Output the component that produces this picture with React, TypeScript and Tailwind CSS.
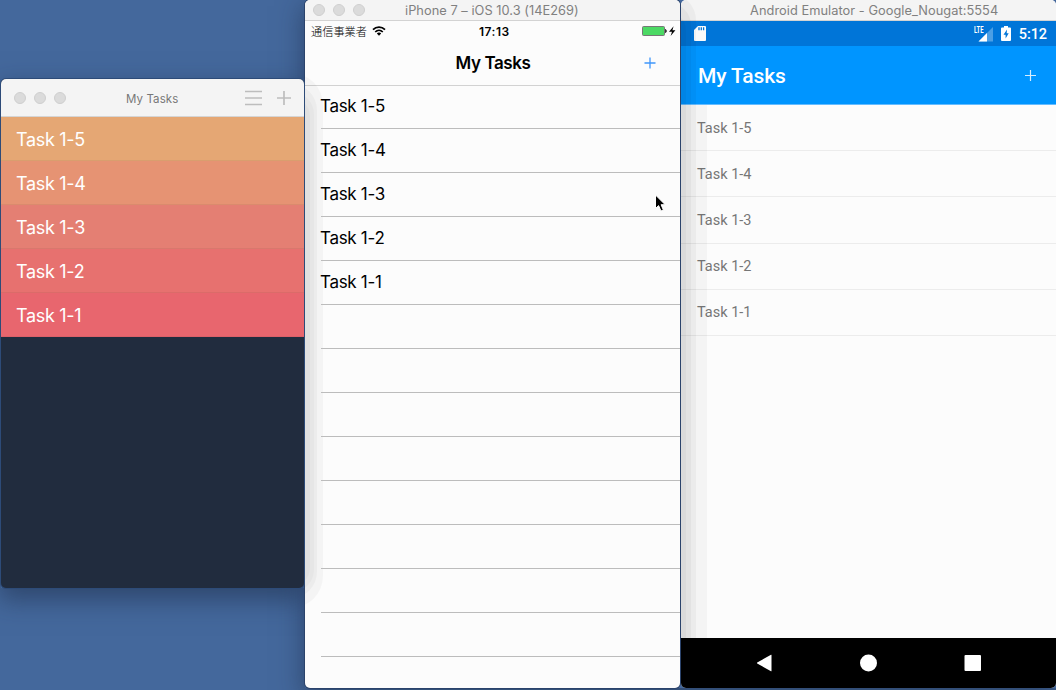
import React from "react";

const rows = ["Task 1-5", "Task 1-4", "Task 1-3", "Task 1-2", "Task 1-1"];
const heat = ["bg-[#e5a774]", "bg-[#e69373]", "bg-[#e47f73]", "bg-[#e7716f]", "bg-[#e8666e]"];
const emptyRows = [1, 2, 3, 4, 5, 6, 7, 8];

function Lights() {
  return (
    <div className="flex gap-2">
      {[0, 1, 2].map((i) => (
        <span key={i} className="size-3 rounded-full border border-[#cfcfcf] bg-[#dbdbdb]" />
      ))}
    </div>
  );
}

function MacWindow() {
  return (
    <section className="absolute left-px top-[79px] flex h-[509px] w-[303px] flex-col overflow-hidden rounded-[5px] bg-[#212c3e] font-['Inter',sans-serif] shadow-[0_0_0_1px_#2d4b78]">
      <header className="relative flex h-[38px] shrink-0 items-center border-b border-[#d5d5d5] bg-[#f4f4f4] px-[13px]">
        <Lights />
        <span className="ml-[60px] mt-[4px] w-[53px] whitespace-nowrap text-[11.5px] tracking-[0.1px] text-[#777]">My Tasks</span>
        <svg className="-mr-px ml-auto" width="48" height="16" viewBox="0 0 48 16" fill="none" stroke="#bdbdbd" strokeWidth="1.7">
          <path d="M1 1.5H18M1 8H18M1 14.5H18M33 8H47M40 1V15" />
        </svg>
      </header>
      {rows.map((r, i) => (
        <div key={r} className={"flex h-11 shrink-0 items-center border-b border-black/5 pl-[15px] pt-[2px] text-[18px] text-white " + heat[i]}>
          <span className="tracking-[-0.3px]">{r}</span>
        </div>
      ))}
    </section>
  );
}

function IosWindow() {
  return (
    <section className="absolute left-[305px] top-0 flex h-[688px] w-[375px] flex-col overflow-hidden rounded-[5px] bg-[#fcfcfc] font-['Inter',sans-serif] shadow-[0_0_0_1px_#2b436b]">
      <header className="relative flex h-[21px] shrink-0 items-center border-b border-[#d3d3d3] bg-[#f4f4f4] pl-2">
        <Lights />
        <span className="ml-[40px] mt-px whitespace-nowrap text-[12.8px] tracking-[0.04px] text-[#808080]">iPhone 7 – iOS 10.3 (14E269)</span>
      </header>
      <div className="relative z-10 flex h-5 shrink-0 items-center text-black">
        <span className="ml-[6px] w-[56px] whitespace-nowrap font-['Noto_Sans_CJK_JP',sans-serif] text-[11.2px] font-light">通信事業者</span>
        <svg className="ml-[5px] w-[14px]" width="14" height="10" viewBox="0 0 14 10" fill="none" stroke="#000" strokeWidth="1.7">
          <path d="M1 3.6C4.3.2 9.7.2 13 3.6M3.2 6C5.4 3.9 8.6 3.9 10.8 6" />
          <path d="M4.8 7.4C6 6.3 8 6.3 9.2 7.4L7 9.8Z" fill="#000" stroke="none" />
        </svg>
        <span className="ml-[93px] mt-px text-[12px] font-semibold tracking-[0.5px]">17:13</span>
        <svg className="ml-auto mr-[4px]" width="34" height="12" viewBox="0 0 34 12">
          <rect x=".5" y="1.5" width="22" height="9" rx="1" fill="#4cd964" stroke="#777" />
          <path d="M23.5 4.2Q25.5 6 23.5 7.8Z" fill="#000" stroke="#000" strokeWidth=".5" />
          <path d="M31.6 1.2L27 6.8H30L28.6 11L33.4 5.3H30.4Z" fill="#000" />
        </svg>
      </div>
      <div className="relative flex h-[45px] shrink-0 items-center justify-center border-b border-[#d2d2d2] pt-[2px]">
        <span className="ml-px text-[17px] font-semibold tracking-[-0.4px] text-black">My Tasks</span>
        <svg className="absolute right-[24px] top-[16px]" width="12" height="12" viewBox="0 0 12 12" stroke="#3f96fa" strokeWidth="1.3">
          <path d="M.5 6H11.5M6 .5V11.5" />
        </svg>
      </div>
      <div className="pointer-events-none absolute -left-6 top-[73px] h-[535px] w-[42px] rounded-r-[32px] bg-black/[0.03]" />
      <div className="pointer-events-none absolute -left-6 top-[84px] h-[514px] w-[36px] rounded-r-[26px] bg-black/[0.03]" />
      <div className="pointer-events-none absolute -left-6 top-[92px] h-[500px] w-[33px] rounded-r-[22px] bg-black/[0.025]" />
      <div className="pointer-events-none absolute -left-6 top-[98px] h-[488px] w-[29px] rounded-r-[18px] bg-black/[0.025]" />
      <div className="relative">
        {rows.map((r, i) => (
          <div key={r} className={"ml-4 flex items-center border-b border-[#bcbcbc] text-[17px] text-black " + (i === 0 ? "h-[43px]" : "h-11 pt-px")}>
            <span className="-ml-px tracking-[-0.3px]">{r}</span>
          </div>
        ))}
        {emptyRows.map((n) => (
          <div key={n} className="ml-4 h-11 border-b border-[#bcbcbc]" />
        ))}
      </div>
    </section>
  );
}

function AndroidWindow() {
  return (
    <section className="absolute left-[681px] top-0 flex h-[688px] w-[375px] flex-col overflow-hidden rounded-[5px] bg-[#fcfcfc] font-['Roboto',sans-serif]">
      <header className="flex h-[21px] shrink-0 items-center border-b border-[#d3d3d3] bg-[#f4f4f4]">
        <span className="ml-[69px] mt-px whitespace-nowrap font-['Inter',sans-serif] text-[12.8px] tracking-[0.05px] text-[#808080]">Android Emulator - Google_Nougat:5554</span>
      </header>
      <div className="flex h-[25px] shrink-0 items-center bg-[#0075d8] pl-[13px] pr-[9px] text-white">
        <svg width="12" height="15" viewBox="0 0 12 15">
          <path d="M4 0H11Q12 0 12 1V14Q12 15 11 15H1Q0 15 0 14V4Z" fill="#fafafa" />
          <path d="M5 1.2V4.2M7.3 1.2V4.2M9.6 1.2V4.2" stroke="#0075d8" strokeWidth="1.3" />
        </svg>
        <div className="relative ml-auto h-[16px] w-[20px]">
          <svg className="absolute inset-0" width="20" height="16" viewBox="0 0 20 16">
            <path d="M19 1V15.5H4.5Z" fill="#4b9fe5" />
            <path d="M13 7V15.5H4.5Z" fill="#fff" />
          </svg>
          <span className="absolute left-0 top-0 origin-left scale-x-[0.62] text-[9.5px] font-bold leading-[8px]">LTE</span>
        </div>
        <svg className="ml-[7px]" width="10" height="15" viewBox="0 0 10 15">
          <path d="M3 0H7V1.5H9Q10 1.5 10 2.5V14Q10 15 9 15H1Q0 15 0 14V2.5Q0 1.5 1 1.5H3Z" fill="#fff" />
          <path d="M6 3.5L2.5 8.8H4.6V12.6L7.7 7.2H5.7Z" fill="#0075d8" />
        </svg>
        <span className="ml-2 mt-[2px] text-[14.5px] font-medium tracking-[-0.1px]">5:12</span>
      </div>
      <div className="flex h-[59px] shrink-0 items-center justify-between border-b border-[#65bcff] bg-[#0095ff] pl-[17px] pr-[20px] text-white">
        <span className="mt-[3px] text-[21px] font-medium tracking-[-0.12px]">My Tasks</span>
        <svg width="11" height="11" viewBox="0 0 11 11" stroke="#d5edff" strokeWidth="1.2">
          <path d="M0 5.5H11M5.5 0V11" />
        </svg>
      </div>
      <div className="grow">
        {rows.map((r) => (
          <div key={r} className="flex h-[46.2px] items-center border-b border-[#ececec] pl-4 pt-[2px] text-[14.5px] text-[#767676]">
            {r}
          </div>
        ))}
      </div>
      <nav className="relative z-10 flex h-[50px] shrink-0 items-center justify-center bg-black">
        <svg width="226" height="18" viewBox="0 0 226 18" fill="#fff">
          <path d="M15.5 1V17Q15.5 17.5 15 17.2L1.2 9.6Q.5 9 1.2 8.4L15 .8Q15.5.5 15.5 1Z" />
          <circle cx="112.5" cy="9" r="8.5" />
          <rect x="208.5" y="1" width="16.5" height="16" rx="1" />
        </svg>
      </nav>
      <div className="pointer-events-none absolute -left-6 top-0 h-[700px] w-[50px] bg-black/[0.03] [clip-path:inset(105px_0_0_0)]" />
      <div className="pointer-events-none absolute -left-6 -top-[6px] h-[700px] w-[39px] rounded-tr-[26px] bg-black/[0.035]" />
      <div className="pointer-events-none absolute -left-6 top-[3px] h-[700px] w-[34px] rounded-tr-[22px] bg-black/[0.035]" />
      <div className="pointer-events-none absolute -left-6 top-[12px] h-[700px] w-[29px] rounded-tr-[18px] bg-black/[0.03]" />
    </section>
  );
}

export default function App() {
  return (
    <main className="relative h-[690px] w-[1056px] overflow-hidden bg-[#44689c]">
      <div className="absolute left-[305px] top-0 h-[688px] w-[751px] shadow-[0_8px_24px_2px_rgba(25,40,65,0.5)]" />
      <div className="absolute left-px top-[79px] h-[509px] w-[303px] shadow-[0_10px_24px_2px_rgba(25,40,65,0.5)]" />
      <AndroidWindow />
      <IosWindow />
      <MacWindow />
      <svg className="absolute left-[654px] top-[193px]" width="14" height="20" viewBox="0 0 14 20">
        <path d="M1.5 2V15.5L4.6 12.6L7 18L9.4 17L7.1 11.7H11.2Z" fill="#000" stroke="#fff" strokeWidth="1" />
      </svg>
    </main>
  );
}
